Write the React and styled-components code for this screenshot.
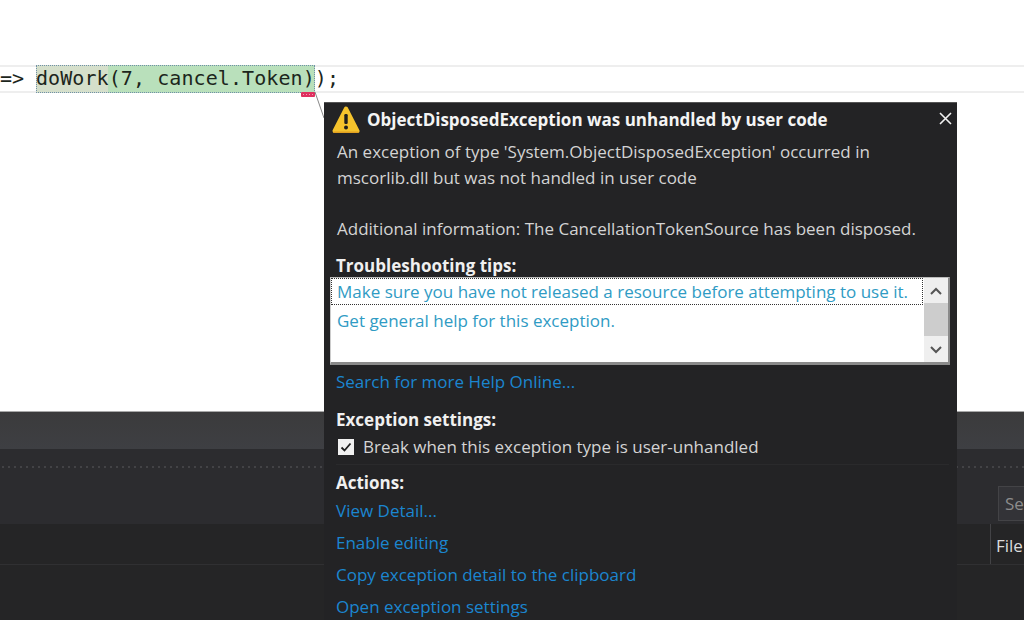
import React from 'react';
import styled, { createGlobalStyle } from 'styled-components';

const GlobalStyle = createGlobalStyle`
  html, body {
    margin: 0;
    padding: 0;
    background: #fff;
  }
`;

const Page = styled.div`
  position: relative;
  width: 1024px;
  height: 620px;
  overflow: hidden;
  display: flex;
  flex-direction: column;
  font-family: "Open Sans", "Noto Sans", sans-serif;
`;

const Editor = styled.div`
  height: 412px;
  flex-shrink: 0;
  box-sizing: border-box;
  padding-top: 65px;
  background: #fff;
  border-bottom: 1px solid #a8a8a8;
`;

const CodeLine = styled.div`
  height: 28px;
  box-sizing: border-box;
  border-top: 2px solid #eeeeee;
  border-bottom: 2px solid #eeeeee;
  display: flex;
  align-items: center;
  font-family: "DejaVu Sans Mono", "Liberation Mono", monospace;
  font-size: 20px;
  letter-spacing: 0.08px;
  color: #1c261c;
  white-space: pre;
`;

const Arrow = styled.span`
  width: 36px;
  flex-shrink: 0;
  line-height: 26px;
  margin-top: -2px;
`;

const Highlight = styled.span`
  position: relative;
  height: 28px;
  line-height: 26px;
  background: linear-gradient(90deg, #d5dfcb 0, #d5dfcb 72px, #b9e0bb 72px);
  outline: 1px dotted #6f8fa8;
  outline-offset: -1px;
`;

const Closing = styled.span`
  line-height: 26px;
  margin-top: -2px;
`;

const Squiggle = styled.i`
  position: absolute;
  right: 0;
  bottom: -4px;
  width: 14px;
  height: 5px;
  border-radius: 1px;
  background:
    repeating-linear-gradient(90deg, #f0a0b8 0 1px, transparent 1px 3px) 2px 2px / 10px 1px no-repeat,
    #e0305f;
`;

const Connector = styled.svg`
  position: absolute;
  left: 312px;
  top: 92px;
`;

const BottomPanel = styled.div`
  flex: 1;
  display: flex;
  flex-direction: column;
  background: #252526;
`;

const TitleStrip = styled.div`
  height: 37px;
  flex-shrink: 0;
  background: linear-gradient(180deg, #3b3b3c, #3e3f43);
`;

const ToolStrip = styled.div`
  height: 75px;
  flex-shrink: 0;
  box-sizing: border-box;
  display: flex;
  justify-content: flex-end;
  background: #2c2c2f;
  position: relative;
`;

const DotRow = styled.div`
  position: absolute;
  left: 0;
  right: 0;
  top: 16px;
  height: 4px;
  background-image: radial-gradient(#434346 1px, transparent 1.2px);
  background-size: 6px 4px;
`;

const SearchBox = styled.div`
  width: 26px;
  height: 35px;
  margin-top: 37px;
  box-sizing: border-box;
  border: 1px solid #434346;
  border-right: none;
  padding: 5px 0 0 6px;
  font-size: 17px;
  color: #8c8c8c;
  background: #333337;
  overflow: hidden;
`;

const HeaderRow = styled.div`
  height: 40px;
  flex-shrink: 0;
  display: flex;
  justify-content: flex-end;
  background: #252526;
  border-bottom: 1px solid #303032;
`;

const HeaderCell = styled.div`
  width: 34px;
  box-sizing: border-box;
  padding: 10px 0 0 5px;
  border-left: 1px solid #434346;
  font-size: 17px;
  color: #dcdcdc;
  overflow: hidden;
`;

const Popup = styled.div`
  position: absolute;
  left: 324px;
  top: 102px;
  width: 633px;
  height: 530px;
  box-sizing: border-box;
  padding: 0 8px 0 12px;
  background: #232325;
  border-top: 1px solid #555;
  color: #d4d4d4;
  font-size: 17px;
`;

const PopupHead = styled.div`
  height: 33px;
  display: flex;
  align-items: center;
  gap: 7px;
  margin-left: -4px;
  position: relative;
`;

const PopupTitle = styled.div`
  font-size: 17px;
  font-weight: 700;
  color: #f4f4f4;
  flex: 1;
`;

const CloseBtn = styled.svg`
  margin-right: -3px;
  margin-top: -2px;
`;

const Message = styled.div`
  line-height: 26px;
  margin-top: 3px;
  padding-left: 1px;
  height: 77px;
`;

const Info = styled.div`
  line-height: 26px;
  padding-left: 1px;
  height: 39px;
`;

const SectionLabel = styled.div`
  font-weight: 700;
  color: #f0f0f0;
  line-height: 22px;
  font-size: 17px;
  margin-bottom: ${(p) => p.$gap || 0}px;
`;

const TipsBox = styled.div`
  position: relative;
  width: 620px;
  height: 88px;
  margin-left: -6px;
  box-sizing: border-box;
  background: #fff;
  border-right: 2px solid #8a8a8a;
  border-bottom: 3px solid #8a8a8a;
  border-top: 1px solid #bbb;
  border-left: 1px solid #ccc;
  display: flex;
`;

const TipsList = styled.div`
  flex: 1;
  min-width: 0;
`;

const Tip = styled.div`
  height: ${(p) => (p.$focused ? '25px' : '28px')};
  line-height: ${(p) => (p.$focused ? '25px' : '30px')};
  padding-left: 5px;
  margin-right: 1px;
  color: #2f9bc4;
  white-space: nowrap;
  border: ${(p) => (p.$focused ? '1px dotted #333' : '1px solid transparent')};
`;

const ScrollBar = styled.div`
  width: 24px;
  flex-shrink: 0;
  background: #efefef;
  display: flex;
  flex-direction: column;
  align-items: center;
  justify-content: space-between;
`;

const ScrollButton = styled.div`
  height: 25px;
  display: flex;
  align-items: center;
  justify-content: center;
  flex-shrink: 0;
`;

const ScrollTrack = styled.div`
  flex: 1;
  align-self: stretch;
`;

const ScrollThumb = styled.div`
  height: 33px;
  background: #cdcdcd;
`;

const PopupLink = styled.div`
  color: #1b86d0;
  line-height: 28px;
  height: 28px;
  white-space: nowrap;
`;

const ActionLink = styled(PopupLink)`
  line-height: 32px;
  height: 32px;
`;

const Group = styled.div`
  margin-top: ${(p) => p.$top || 0}px;
`;

const CheckRow = styled.div`
  display: flex;
  align-items: center;
  gap: 9px;
  height: 29px;
  margin-top: 1px;
  padding-left: 2px;
  border-bottom: 1px solid #2a2a2c;
  padding-bottom: 3px;
`;

const CheckBox = styled.span`
  width: 16px;
  height: 16px;
  background: #f1f1f1;
  display: flex;
  align-items: center;
  justify-content: center;
`;

function WarningIcon() {
  return (
    <svg width="28" height="30" viewBox="0 0 28 30">
      <path d="M14 3.5 L25.5 26 H2.5 Z" fill="#f5c32c" stroke="#f5c32c" strokeWidth="4" strokeLinejoin="round" />
      <path d="M2 27.2 H26" stroke="#e0a020" strokeWidth="1.4" strokeLinecap="round" />
      <rect x="12.3" y="9" width="3.4" height="10" rx="1.2" fill="#1e1e1e" />
      <circle cx="14" cy="22.6" r="2" fill="#1e1e1e" />
    </svg>
  );
}

function Chevron({ up }) {
  return (
    <svg width="12" height="8" viewBox="0 0 12 8">
      <path d={up ? 'M1 7 L6 2 L11 7' : 'M1 1 L6 6 L11 1'} fill="none" stroke="#555" strokeWidth="2" />
    </svg>
  );
}

export default function App() {
  return (
    <Page>
      <GlobalStyle />
      <Editor>
        <CodeLine>
          <Arrow>=&gt;</Arrow>
          <Highlight>
            doWork(7, cancel.Token)
            <Squiggle />
          </Highlight>
          <Closing>);</Closing>
        </CodeLine>
      </Editor>
      <BottomPanel>
        <TitleStrip />
        <ToolStrip>
          <DotRow />
          <SearchBox>Se</SearchBox>
        </ToolStrip>
        <HeaderRow>
          <HeaderCell>File</HeaderCell>
        </HeaderRow>
      </BottomPanel>

      <Connector width="14" height="30" viewBox="0 0 14 30">
        <path d="M3 0 L12 26" stroke="#888" strokeWidth="1" fill="none" />
      </Connector>

      <Popup>
        <PopupHead>
          <WarningIcon />
          <PopupTitle>ObjectDisposedException was unhandled by user code</PopupTitle>
          <CloseBtn width="13" height="13" viewBox="0 0 13 13">
            <path d="M1 1 L12 12 M12 1 L1 12" stroke="#f2f2f2" strokeWidth="1.6" />
          </CloseBtn>
        </PopupHead>
        <Message>
          An exception of type 'System.ObjectDisposedException' occurred in
          <br />
          mscorlib.dll but was not handled in user code
        </Message>
        <Info>Additional information: The CancellationTokenSource has been disposed.</Info>
        <SectionLabel>Troubleshooting tips:</SectionLabel>
        <TipsBox>
          <TipsList>
            <Tip $focused>Make sure you have not released a resource before attempting to use it.</Tip>
            <Tip>Get general help for this exception.</Tip>
          </TipsList>
          <ScrollBar>
            <ScrollButton><Chevron up /></ScrollButton>
            <ScrollTrack>
              <ScrollThumb />
            </ScrollTrack>
            <ScrollButton><Chevron /></ScrollButton>
          </ScrollBar>
        </TipsBox>
        <Group $top={3}>
          <PopupLink>Search for more Help Online...</PopupLink>
        </Group>
        <Group $top={13}>
          <SectionLabel>Exception settings:</SectionLabel>
          <CheckRow>
            <CheckBox>
              <svg width="12" height="12" viewBox="0 0 12 12">
                <path d="M1.5 6.5 L4.5 9.5 L10.5 2.5" fill="none" stroke="#1e1e1e" strokeWidth="1.8" />
              </svg>
            </CheckBox>
            Break when this exception type is user-unhandled
          </CheckRow>
        </Group>
        <Group $top={7}>
          <SectionLabel $gap={1}>Actions:</SectionLabel>
          <ActionLink>View Detail...</ActionLink>
          <ActionLink>Enable editing</ActionLink>
          <ActionLink>Copy exception detail to the clipboard</ActionLink>
          <ActionLink>Open exception settings</ActionLink>
        </Group>
      </Popup>
    </Page>
  );
}
